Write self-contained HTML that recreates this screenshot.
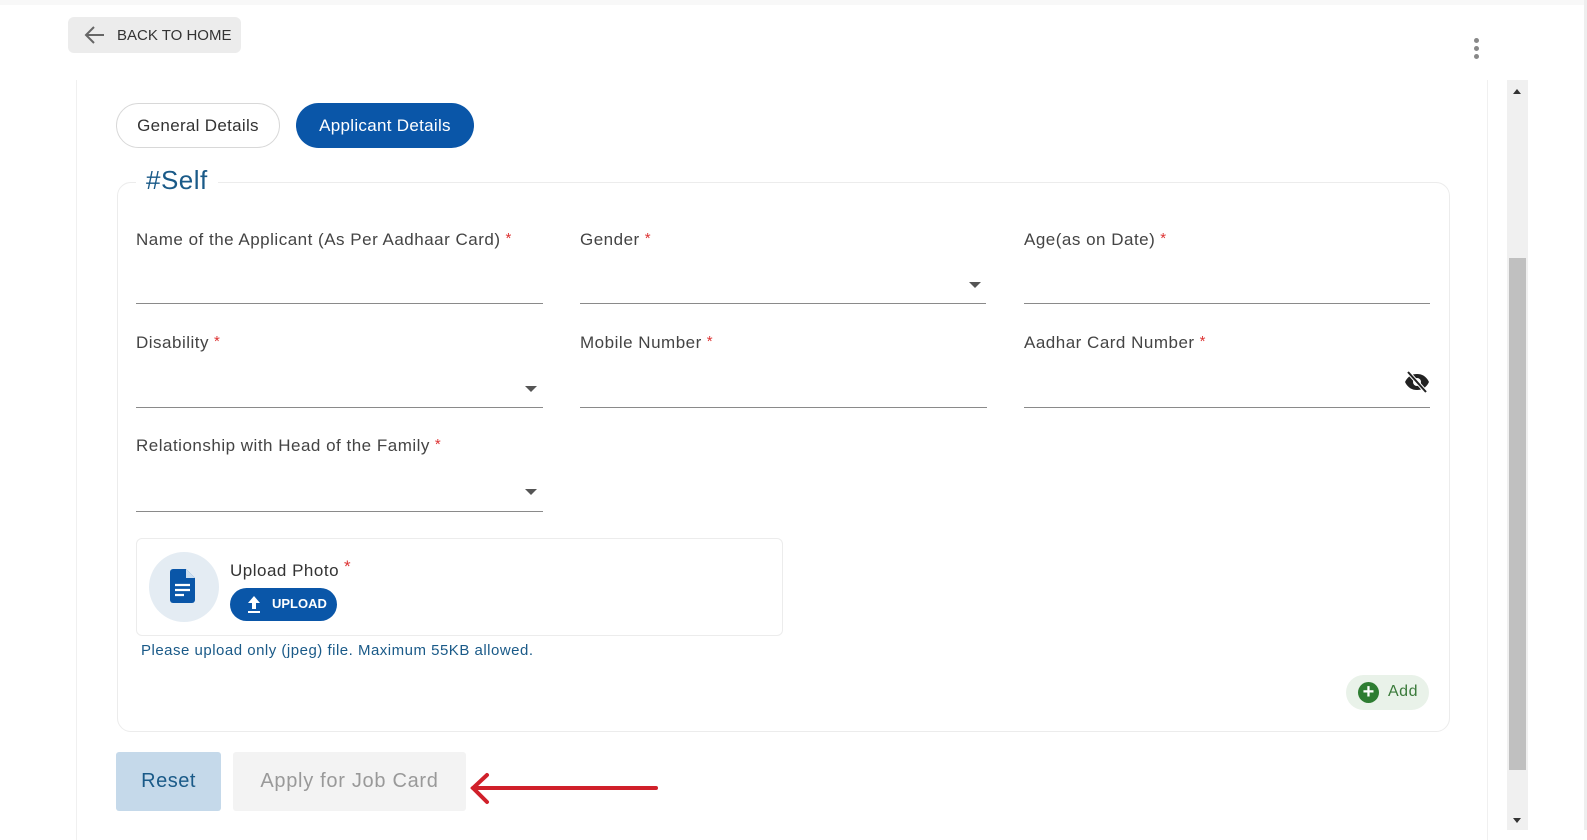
<!DOCTYPE html>
<html><head><meta charset="utf-8"><style>
*{box-sizing:border-box;margin:0;padding:0}
body{width:1587px;height:830px;background:#fff;font-family:"Liberation Sans",sans-serif;position:relative;overflow:hidden;color:#333;letter-spacing:.5px}
.a{position:absolute}
.lbl{font-size:17px;color:#444}
.lbl b{color:#d33;font-weight:normal;font-size:15px;vertical-align:2px;margin-left:5px}
.line{height:1px;background:#8a8a8a}
.caret{width:0;height:0;border-left:6px solid transparent;border-right:6px solid transparent;border-top:6px solid #555}
</style></head><body>
<div class="a" style="left:0;top:0;width:1587px;height:5px;background:#f8f8f8"></div>
<div class="a" style="left:1584px;top:0;width:3px;height:830px;background:#eee"></div>
<div class="a" style="left:68px;top:17px;width:173px;height:36px;background:#ececec;border-radius:6px"></div>
<svg class="a" style="left:84px;top:25px" width="22" height="20" viewBox="0 0 22 20"><path d="M20 10H3M10 2L2 10l8 8" fill="none" stroke="#666" stroke-width="2"/></svg>
<div class="a" style="left:117px;top:27px;font-size:15px;color:#333;letter-spacing:0">BACK TO HOME</div>
<div class="a" style="left:1474px;top:38px;width:5px;height:5px;border-radius:50%;background:#888"></div>
<div class="a" style="left:1474px;top:46px;width:5px;height:5px;border-radius:50%;background:#888"></div>
<div class="a" style="left:1474px;top:54px;width:5px;height:5px;border-radius:50%;background:#888"></div>
<div class="a" style="left:76px;top:80px;width:1412px;height:760px;border-left:1px solid #f0f0f0;border-right:1px solid #f0f0f0"></div>
<div class="a" style="left:1507px;top:80px;width:21px;height:750px;background:#f0f0f0"></div>
<div class="a" style="left:1509px;top:258px;width:17px;height:512px;background:#c0c0c0"></div>
<div class="a" style="left:1513px;top:89px;border-left:4px solid transparent;border-right:4px solid transparent;border-bottom:5px solid #333"></div>
<div class="a" style="left:1513px;top:818px;border-left:4px solid transparent;border-right:4px solid transparent;border-top:5px solid #333"></div>
<div class="a" style="left:116px;top:103px;width:164px;height:45px;border:1px solid #d8d8d8;border-radius:23px;font-size:17px;color:#333;text-align:center;line-height:43px;letter-spacing:.3px">General Details</div>
<div class="a" style="left:296px;top:103px;width:178px;height:45px;background:#0a56a8;border-radius:23px;font-size:17px;color:#fff;text-align:center;line-height:45px;letter-spacing:.3px">Applicant Details</div>
<div class="a" style="left:117px;top:182px;width:1333px;height:550px;border:1px solid #ececec;border-radius:14px"></div>
<div class="a" style="left:136px;top:165px;background:#fff;padding:0 10px;font-size:26px;color:#1a5a88">#Self</div>
<div class="a lbl" style="left:136px;top:230px">Name of the Applicant (As Per Aadhaar Card)<b>*</b></div>
<div class="a line" style="left:136px;top:303px;width:407px"></div>
<div class="a lbl" style="left:580px;top:230px">Gender<b>*</b></div>
<div class="a caret" style="left:969px;top:282px"></div>
<div class="a line" style="left:580px;top:303px;width:406px"></div>
<div class="a lbl" style="left:1024px;top:230px">Age(as on Date)<b>*</b></div>
<div class="a line" style="left:1024px;top:303px;width:406px"></div>
<div class="a lbl" style="left:136px;top:333px">Disability<b>*</b></div>
<div class="a caret" style="left:525px;top:386px"></div>
<div class="a line" style="left:136px;top:407px;width:407px"></div>
<div class="a lbl" style="left:580px;top:333px">Mobile Number<b>*</b></div>
<div class="a line" style="left:580px;top:407px;width:407px"></div>
<div class="a lbl" style="left:1024px;top:333px">Aadhar Card Number<b>*</b></div>
<svg class="a" style="left:1404px;top:371px" width="26" height="22" viewBox="0 0 26 22"><path d="M1 11C4 5 8 3 13 3s9 2 12 8c-3 6-7 8-12 8S4 17 1 11z" fill="#222"/><circle cx="13" cy="11" r="4" fill="#fff"/><path d="M4 1l18 20" stroke="#fff" stroke-width="4"/><path d="M4 1l18 20" stroke="#222" stroke-width="2"/></svg>
<div class="a line" style="left:1024px;top:407px;width:406px"></div>
<div class="a lbl" style="left:136px;top:436px">Relationship with Head of the Family<b>*</b></div>
<div class="a caret" style="left:525px;top:489px"></div>
<div class="a line" style="left:136px;top:511px;width:407px"></div>
<div class="a" style="left:136px;top:538px;width:647px;height:98px;border:1px solid #ececec;border-radius:6px"></div>
<div class="a" style="left:149px;top:552px;width:70px;height:70px;border-radius:50%;background:#e4ecf3"></div>
<svg class="a" style="left:170px;top:568px" width="26" height="36" viewBox="0 0 26 36"><path d="M3 1h13l9 9v22a3 3 0 0 1-3 3H3a3 3 0 0 1-3-3V4a3 3 0 0 1 3-3z" fill="#0a56a8"/><path d="M16 1v9h9" fill="#cfe0f0"/><path d="M5 17h15M5 22h15M5 27h9" stroke="#fff" stroke-width="2.2"/></svg>
<div class="a" style="left:230px;top:557px;font-size:17px;color:#333">Upload Photo<span style="color:#d33;margin-left:5px;vertical-align:4px">*</span></div>
<div class="a" style="left:230px;top:588px;width:107px;height:33px;background:#0a56a8;border-radius:17px"></div>
<svg class="a" style="left:246px;top:594px" width="16" height="20" viewBox="0 0 16 20"><path d="M8 2L2 9h4v6h4V9h4z" fill="#fff"/><path d="M2 18h12" stroke="#fff" stroke-width="2"/></svg>
<div class="a" style="left:272px;top:596px;font-size:13px;font-weight:bold;color:#fff;letter-spacing:0">UPLOAD</div>
<div class="a" style="left:141px;top:642px;font-size:15px;color:#1a5a88">Please upload only (jpeg) file. Maximum 55KB allowed.</div>
<div class="a" style="left:1346px;top:675px;width:83px;height:35px;border-radius:18px;background:#e9f2e9"></div>
<div class="a" style="left:1358px;top:682px;width:21px;height:21px;border-radius:50%;background:#2e7d32;color:#fff;font-size:20px;line-height:20px;text-align:center;font-weight:bold;letter-spacing:0">+</div>
<div class="a" style="left:1388px;top:683px;font-size:16px;color:#3a7a3a">Add</div>
<div class="a" style="left:116px;top:752px;width:105px;height:59px;background:#c5d9ea;border-radius:3px;color:#1a5a88;font-size:20px;text-align:center;line-height:59px">Reset</div>
<div class="a" style="left:233px;top:752px;width:233px;height:59px;background:#f3f3f3;border-radius:3px;color:#999;font-size:20px;text-align:center;line-height:59px;letter-spacing:.7px">Apply for Job Card</div>
<svg class="a" style="left:470px;top:770px" width="200" height="40" viewBox="0 0 200 40"><path d="M3 18H186" stroke="#d0202a" stroke-width="4" stroke-linecap="round"/><path d="M17 5L3 18l14 14" fill="none" stroke="#d0202a" stroke-width="4" stroke-linecap="round"/></svg>
</body></html>
